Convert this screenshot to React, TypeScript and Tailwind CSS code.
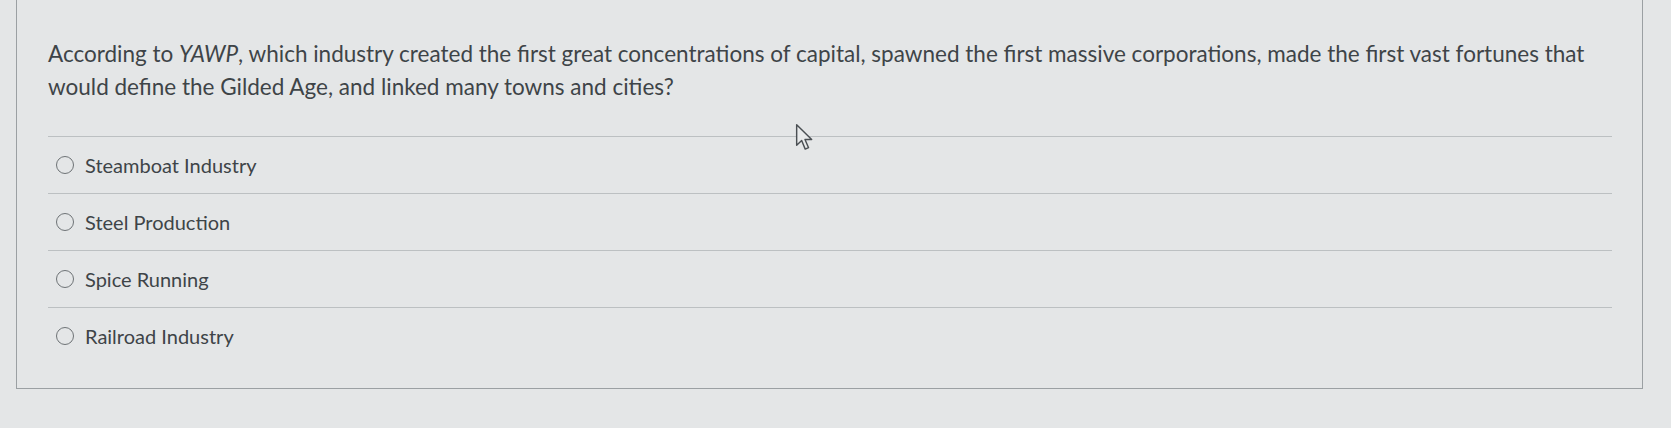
const options = ['Steamboat Industry', 'Steel Production', 'Spice Running', 'Railroad Industry'];

function Cursor() {
  return (
    <svg className="absolute left-[795px] top-[123px]" width="20" height="30" viewBox="0 0 18 27">
      <path
        d="M1.5 1.5 L1.5 20 L6 15.8 L9.2 23.5 L12.2 22.2 L9 14.8 L15 14.8 Z"
        fill="#e8eaeb"
        stroke="#4a4f53"
        strokeWidth="1.3"
        strokeLinejoin="round"
      />
    </svg>
  );
}

export default function App() {
  return (
    <div className="relative w-[1671px] h-[428px] overflow-hidden bg-[#e4e6e7] font-['Lato','Liberation_Sans',sans-serif] text-[#3e4448]">
      <div className="ml-[16px] w-[1627px] h-[389px] border-x border-b border-[#9ba0a3] pl-[31px] pr-[30px]">
        <p className="pt-[37px] text-[22.5px] leading-[33px]">
          According to <em>YAWP</em>, which industry created the first great concentrations of capital, spawned the first
          massive corporations, made the first vast fortunes that would define the Gilded Age, and linked many towns and
          cities?
        </p>

        <ul className="mt-[33px]">
          {options.map((label) => (
            <li key={label} className="h-[57px] border-t border-[#bcc0c2] flex items-center">
              <span className="ml-[8px] w-[18px] h-[18px] rounded-full border-[1.5px] border-[#6e7376] shrink-0" />
              <span className="ml-[11px] text-[20px]">{label}</span>
            </li>
          ))}
        </ul>
      </div>
      <Cursor />
    </div>
  );
}
